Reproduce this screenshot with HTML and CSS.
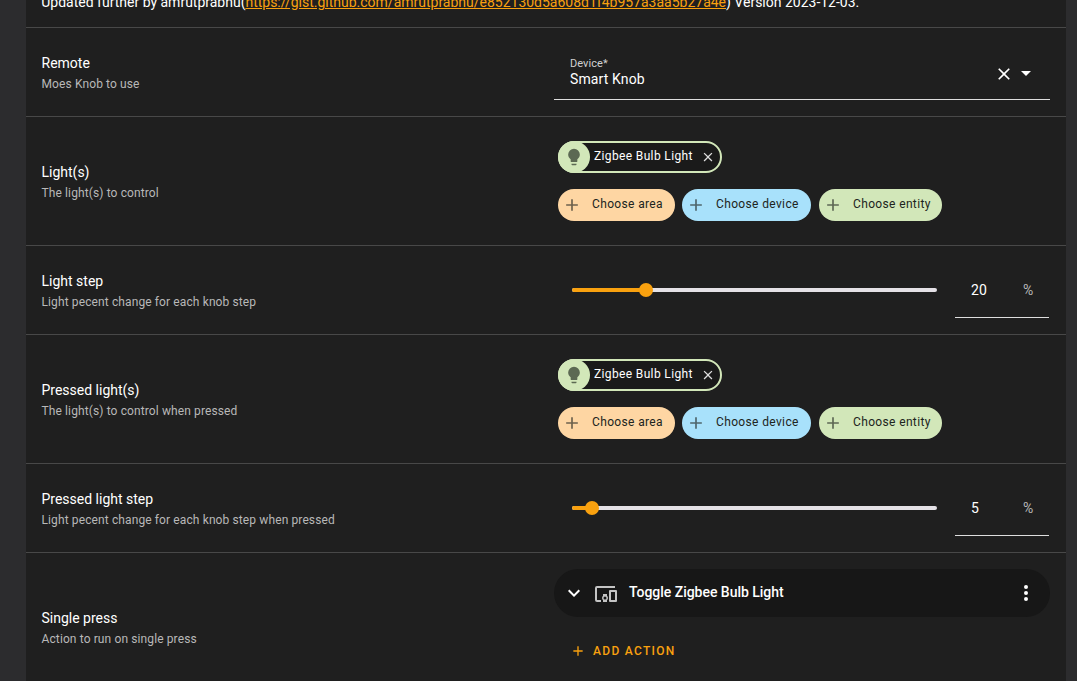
FILE: index.html
```html
<!DOCTYPE html>
<html lang="en">
<head>
<meta charset="utf-8">
<title>Blueprint inputs</title>
<link rel="stylesheet" href="styles.css">
</head>
<body>
<svg class="defs" aria-hidden="true">
  <symbol id="close" viewBox="0 0 24 24"><path d="M19 6.41 17.59 5 12 10.59 6.41 5 5 6.41 10.59 12 5 17.59 6.41 19 12 13.41 17.59 19 19 17.59 13.41 12z"/></symbol>
  <symbol id="plus" viewBox="0 0 24 24"><path d="M19 13h-6v6h-2v-6H5v-2h6V5h2v6h6v2z"/></symbol>
  <symbol id="bulb" viewBox="0 0 24 24"><path d="M12 2A7 7 0 0 0 5 9c0 2.38 1.19 4.47 3 5.74V17a1 1 0 0 0 1 1h6a1 1 0 0 0 1-1v-2.26c1.81-1.27 3-3.36 3-5.74a7 7 0 0 0-7-7M9 21a1 1 0 0 0 1 1h4a1 1 0 0 0 1-1v-1H9z"/></symbol>
</svg>
<main class="card">
  <p class="description">Updated further by amrutprabhu(<a href="#">https://gist.github.com/amrutprabhu/e852130d5a608d1f4b957a3aa5b27a4e</a>) Version 2023-12-03.</p>

  <section class="row">
    <div class="label"><h2>Remote</h2><p>Moes Knob to use</p></div>
    <div class="field">
      <div class="value"><small>Device*</small><span>Smart Knob</span></div>
      <svg class="clear"><use href="#close"/></svg>
      <svg class="caret" viewBox="0 0 10 5"><path d="M0 0h10L5 5z"/></svg>
    </div>
  </section>

  <section class="row tall">
    <div class="label"><h2>Light(s)</h2><p>The light(s) to control</p></div>
    <div class="targets">
      <div class="chip"><span class="badge"><svg><use href="#bulb"/></svg></span><span class="name">Zigbee Bulb Light</span><svg class="remove"><use href="#close"/></svg></div>
      <div class="choices">
        <button class="choose area"><svg><use href="#plus"/></svg>Choose area</button>
        <button class="choose device"><svg><use href="#plus"/></svg>Choose device</button>
        <button class="choose entity"><svg><use href="#plus"/></svg>Choose entity</button>
      </div>
    </div>
  </section>

  <section class="row">
    <div class="label"><h2>Light step</h2><p>Light pecent change for each knob step</p></div>
    <div class="range">
      <div class="track"><div class="fill" style="width:20.2%"></div></div>
      <div class="number"><span>20</span><span class="unit">%</span></div>
    </div>
  </section>

  <section class="row tall">
    <div class="label"><h2>Pressed light(s)</h2><p>The light(s) to control when pressed</p></div>
    <div class="targets">
      <div class="chip"><span class="badge"><svg><use href="#bulb"/></svg></span><span class="name">Zigbee Bulb Light</span><svg class="remove"><use href="#close"/></svg></div>
      <div class="choices">
        <button class="choose area"><svg><use href="#plus"/></svg>Choose area</button>
        <button class="choose device"><svg><use href="#plus"/></svg>Choose device</button>
        <button class="choose entity"><svg><use href="#plus"/></svg>Choose entity</button>
      </div>
    </div>
  </section>

  <section class="row">
    <div class="label"><h2>Pressed light step</h2><p>Light pecent change for each knob step when pressed</p></div>
    <div class="range">
      <div class="track"><div class="fill" style="width:5.5%"></div></div>
      <div class="number"><span>5</span><span class="unit">%</span></div>
    </div>
  </section>

  <section class="row actions-row">
    <div class="label"><h2>Single press</h2><p>Action to run on single press</p></div>
    <div class="actions">
      <div class="action">
        <svg class="chevron" viewBox="0 0 24 24"><path d="M7.41 8.58 12 13.17l4.59-4.59L18 10l-6 6-6-6z"/></svg>
        <svg class="devices" viewBox="0 0 24 24"><path d="M3 6h18V4H3a2 2 0 0 0-2 2v12a2 2 0 0 0 2 2h4v-2H3zm10 6H9v1.78c-.61.55-1 1.33-1 2.22s.39 1.67 1 2.22V20h4v-1.78c.61-.55 1-1.34 1-2.22s-.39-1.67-1-2.22zm-2 5.5a1.5 1.5 0 1 1 0-3 1.5 1.5 0 0 1 0 3M22 8h-6a1 1 0 0 0-1 1v10a1 1 0 0 0 1 1h6a1 1 0 0 0 1-1V9a1 1 0 0 0-1-1m-1 10h-4v-8h4z"/></svg>
        <strong>Toggle Zigbee Bulb Light</strong>
        <svg class="menu" viewBox="0 0 24 24"><path d="M12 16a2 2 0 1 1 0 4 2 2 0 0 1 0-4m0-6a2 2 0 1 1 0 4 2 2 0 0 1 0-4m0-6a2 2 0 1 1 0 4 2 2 0 0 1 0-4"/></svg>
      </div>
      <button class="add"><svg><use href="#plus"/></svg>ADD ACTION</button>
    </div>
  </section>
</main>
</body>
</html>
```

FILE: styles.css
```css
* { box-sizing: border-box; }
body {
  margin: 0;
  height: 681px;
  overflow: hidden;
  background: #2c2c2e;
  color: #fff;
  font: 14px/20px Roboto, "Liberation Sans", sans-serif;
}
h2, p { margin: 0; font-weight: 400; }
svg { display: block; flex: none; fill: currentColor; }
button { border: 0; margin: 0; font: inherit; }
.defs { position: absolute; width: 0; height: 0; }
.card { width: 1040px; height: 681px; margin-left: 26px; background: #1f1f1f; overflow: hidden; }
.description { height: 27px; margin: -8px 0 8px; padding-left: 15.3px; white-space: nowrap; letter-spacing: -.005px; }
.description a { color: #f9a10f; }

.row {
  display: grid;
  grid-template-columns: 512px 496px;
  align-items: center;
  height: 89px;
  padding: 0 16px;
  border-top: 1px solid #484848;
}
.tall { height: 129px; }
.actions-row { height: 148px; }
.label { padding-top: 3px; margin-left: -.5px; }
.label h2 { font-size: 14px; line-height: 21px; }
.label p { font-size: 12px; line-height: 20px; letter-spacing: .115px; color: #b8b8b8; }

.field { display: flex; align-items: center; height: 56px; padding: 3px 19px 0 16px; border-bottom: 1px solid #dedede; }
.value { display: flex; flex-direction: column; flex: 1; letter-spacing: .12px; }
.value small { font-size: 11px; line-height: 13px; color: #d0d0d0; letter-spacing: .05px; }
.value span { line-height: 19px; }
.clear { width: 20px; height: 20px; margin: 1px 7px 0 0; }
.caret { width: 10px; height: 5px; }

.targets { display: flex; flex-direction: column; align-items: flex-start; gap: 16px; padding-left: 4px; font-size: 12px; letter-spacing: .36px; }
.chip { display: flex; align-items: center; width: 164px; height: 32px; border: 2px solid #d2e7b9; border-radius: 16px; background: #1a1a1a; }
.name { flex: 1; margin-top: -2px; white-space: nowrap; }
.badge { display: grid; place-items: center; width: 32px; height: 32px; margin: -2px 4px -2px -2px; border-radius: 50%; background: #d2e7b9; color: #5c6953; }
.badge svg { width: 20px; height: 20px; }
.remove { width: 16px; height: 16px; margin-right: 4px; padding: .5px; color: #ddd; }
.choices { display: flex; gap: 8px; }
.choose { display: flex; align-items: center; height: 32px; padding: 0 0 2px 4px; border-radius: 16px; color: #202420; letter-spacing: .36px; white-space: nowrap; }
.choose svg { width: 20px; height: 20px; margin: 2px 10px 0 0; opacity: .65; }
.area { width: 117px; background: #fed6a3; margin-right: -1px; }
.device { width: 129px; background: #a8e1fb; }
.entity { width: 123px; background: #d2e7b9; }

.range { display: flex; align-items: center; height: 56px; padding: 0 1px 0 18px; }
.track { width: 365px; height: 4px; border-radius: 2px; background: #e4e1e6; }
.fill { position: relative; height: 4px; border-radius: 2px; background: #f9a10f; }
.fill::after { content: ""; position: absolute; right: -7px; top: -5px; width: 14px; height: 14px; border-radius: 50%; background: #f9a10f; }
.number { display: flex; justify-content: space-between; align-items: center; width: 94px; height: 56px; margin-left: auto; padding: 1px 15.5px 0 16px; border-bottom: 1px solid #dedede; letter-spacing: .15px; }
.unit { color: #b8b8b8; }

.actions { align-self: start; padding-top: 16px; }
.action { display: flex; align-items: center; height: 48px; padding: 0 12px 0 8px; border-radius: 24px; background: #171717; }
.chevron { width: 24px; height: 24px; margin-right: 8px; }
.devices { width: 24px; height: 24px; margin: 2px 11px 0 0; color: #c4c4c4; }
.action strong { flex: 1; margin-top: -2px; font-weight: 500; letter-spacing: -.03px; }
.menu { width: 24px; height: 24px; }
.add { display: flex; align-items: center; height: 36px; margin-top: 16px; padding: 0 16px; background: none; color: #f9a10f; font-size: 12px; font-weight: 500; letter-spacing: 1.3px; }
.add svg { width: 16px; height: 16px; margin-right: 7px; }
```
